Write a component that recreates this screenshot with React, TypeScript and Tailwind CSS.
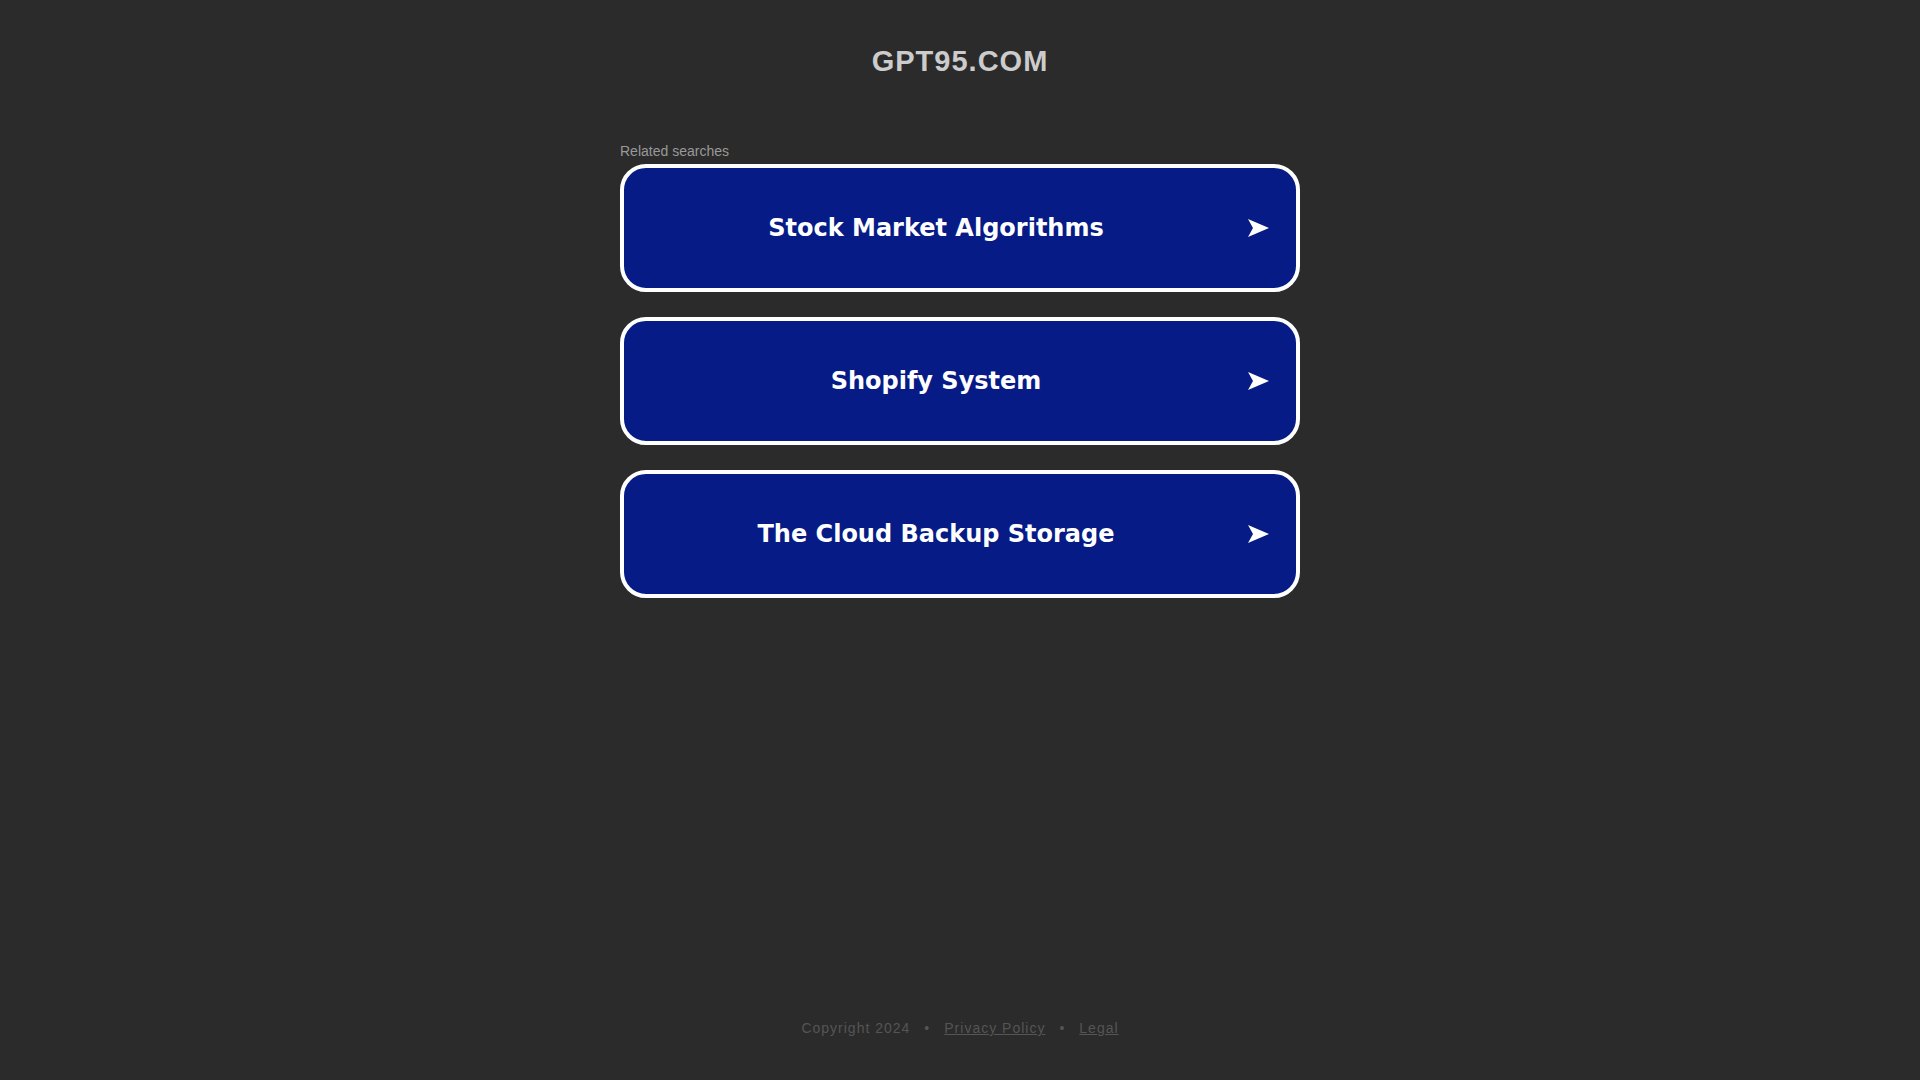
const searches = ["Stock Market Algorithms", "Shopify System", "The Cloud Backup Storage"];

export default function App() {
  return (
    <div className="flex min-h-screen flex-col items-center bg-[#2b2b2b] font-['Liberation_Sans',Arial,sans-serif]">
      <header className="pt-[45px]">
        <h1 className="text-[29px] leading-8 font-bold tracking-[1px] text-[#ccc]">GPT95.COM</h1>
      </header>
      <main className="mt-16 w-full max-w-[680px] grow">
        <p className="mb-[3px] text-sm leading-5 text-[#999]">Related searches</p>
        <ul className="flex flex-col gap-[25px]">
          {searches.map((title) => (
            <li key={title}>
              <a
                href="#"
                className="flex items-center rounded-[26px] border-4 border-white bg-[#061b85] py-10 pr-[27px] text-white"
              >
                <span className="grow text-center font-[Verdana,'DejaVu_Sans',sans-serif] text-2xl leading-10 font-bold">
                  {title}
                </span>
                <svg viewBox="0 0 21 18" className="h-[18px] w-[21px]" fill="currentColor" aria-hidden="true">
                  <path d="M0 0 L21 9 L0 18 L5 9 Z" />
                </svg>
              </a>
            </li>
          ))}
        </ul>
      </main>
      <footer className="flex pb-[42px] text-sm leading-5 tracking-[1px] text-[#555]">
        <span>Copyright 2024</span>
        <span className="mx-[14px]">•</span>
        <a href="#" className="underline">Privacy Policy</a>
        <span className="mx-[14px]">•</span>
        <a href="#" className="underline">Legal</a>
      </footer>
    </div>
  );
}
